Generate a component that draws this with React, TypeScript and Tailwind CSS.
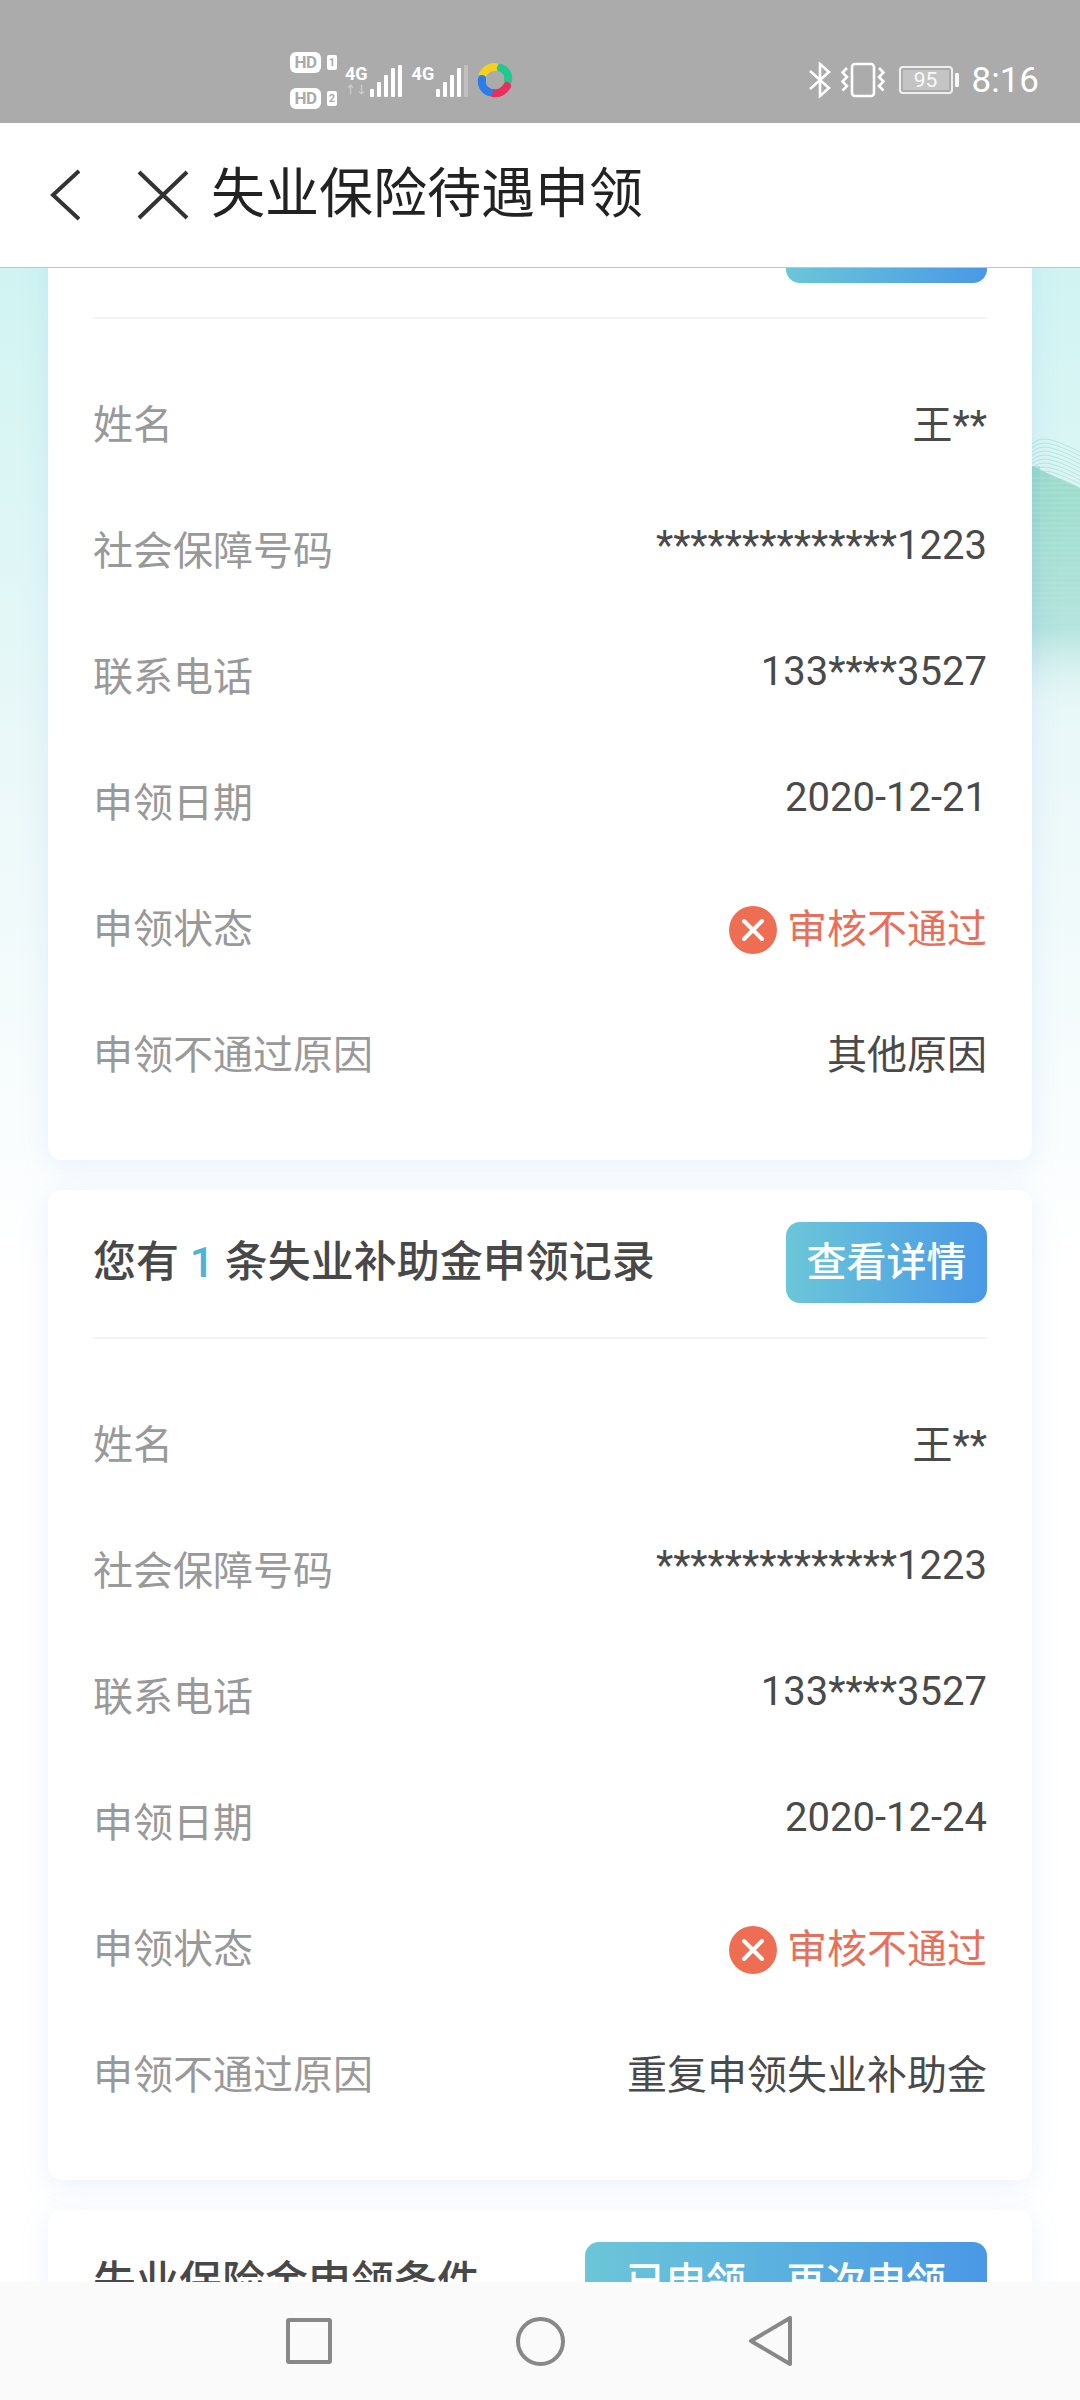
import React from "react";

const FONT = "font-['Roboto','Noto_Sans_CJK_SC',sans-serif]";

function Bars({ dim }: { dim?: boolean }) {
  const hs = [8, 15, 22, 29];
  return (
    <svg width="36" height="32" viewBox="0 0 36 32">
      {hs.map((h, i) => (
        <rect key={i} x={2 + i * 7} y={32 - h} width="4" height={h} rx="1" fill="#fff" />
      ))}
      <rect x="30" y="0" width="4" height="32" rx="1" fill="#fff" opacity={dim ? 0.25 : 1} />
    </svg>
  );
}

function HdBadge({ n }: { n: string }) {
  return (
    <div className="flex items-center gap-[6px]">
      <span className="flex h-[21px] w-[31px] items-center justify-center rounded-[6px] bg-white text-[17px] font-bold leading-none tracking-tight text-[#ababab]">HD</span>
      <span className="flex h-[15px] w-[10px] items-center justify-center rounded-[2px] bg-white text-[11px] font-bold leading-none text-[#ababab]">{n}</span>
    </div>
  );
}

function StatusBar() {
  return (
    <div className={`flex h-[123px] shrink-0 items-center bg-[#ababab] pt-[37px] text-white ${FONT}`}>
      <div className="ml-[290px] flex flex-col gap-[15px]">
        <HdBadge n="1" />
        <HdBadge n="2" />
      </div>
      <div className="ml-[8px] flex items-end">
        <div className="mb-[-1px] flex flex-col">
          <span className="text-[18px] font-bold leading-[20px]">4G</span>
          <span className="text-[11px] font-bold leading-[14px] opacity-40">↑↓</span>
        </div>
        <Bars />
      </div>
      <div className="ml-[8px] flex items-end">
        <span className="mb-[13px] text-[18px] font-bold leading-[20px]">4G</span>
        <Bars dim />
      </div>
      <svg className="ml-[7px]" width="36" height="36" viewBox="0 0 36 36" fill="none" strokeWidth="8" strokeLinecap="round">
        <path d="M6 12 C 9 7 13 5 18 5" stroke="#f6cf1f" />
        <path d="M24 6 C 29 8 32 13 31 18" stroke="#22c98f" />
        <path d="M30 24 C 27 29 22 32 16 31" stroke="#e8305f" />
        <path d="M5 17 C 4 23 7 28 12 30" stroke="#2b7de9" />
      </svg>
      <div className="ml-auto mr-[41px] flex items-center">
        <svg width="24" height="36" viewBox="0 0 24 36" fill="none" stroke="#fff" strokeWidth="2.6">
          <path d="M2 9 L21 26 L12 34 V2 L21 10 L2 27" />
        </svg>
        <svg className="ml-[9px]" width="44" height="36" viewBox="0 0 44 36" fill="none" stroke="#fff" strokeWidth="2.6">
          <rect x="11" y="2" width="22" height="32" rx="3" />
          <path d="M6 6 L1.5 10.5 L6 15 L1.5 19.5 L6 24 L1.5 28.5" />
          <path d="M38 6 L42.5 10.5 L38 15 L42.5 19.5 L38 24 L42.5 28.5" />
        </svg>
        <div className="ml-[14px] flex items-center gap-[2px]">
          <div className="flex h-[28px] w-[54px] rounded-[4px] border-2 border-white/80 p-[2px]">
            <div className="flex flex-1 items-center justify-center rounded-[1px] bg-white/30 text-[21px] leading-none text-white/90">95</div>
          </div>
          <div className="h-[14px] w-[4px] rounded-[1px] bg-white/90" />
        </div>
        <span className="ml-[13px] text-[35px] leading-none">8:16</span>
      </div>
    </div>
  );
}

function Header() {
  return (
    <div className={`relative z-10 flex h-[145px] shrink-0 items-center border-b border-[#c4c4c4] bg-white pl-[50px] ${FONT}`}>
      <svg width="30" height="52" viewBox="0 0 30 52" fill="none" stroke="#333" strokeWidth="4">
        <path d="M29 2 L3 26 L29 50" />
      </svg>
      <svg className="ml-[57px]" width="52" height="50" viewBox="0 0 52 50" fill="none" stroke="#333" strokeWidth="4">
        <path d="M2 2 L50 48 M50 2 L2 48" />
      </svg>
      <h1 className="ml-[22px] text-[54px] font-normal leading-none text-[#222]">失业保险待遇申领</h1>
    </div>
  );
}

type Row = { label: string; value: React.ReactNode; lift?: boolean };

function Rejected() {
  return (
    <span className="flex items-center gap-[10px] text-[#e8705a]">
      <svg width="48" height="48" viewBox="0 0 48 48">
        <circle cx="24" cy="24" r="24" fill="#ee6e53" />
        <path d="M15 15 L33 33 M33 15 L15 33" stroke="#fff" strokeWidth="4" strokeLinecap="round" />
      </svg>
      审核不通过
    </span>
  );
}

function Card({ title, button, wide, rows }: { title?: React.ReactNode; button?: string; wide?: boolean; rows: Row[] }) {
  return (
    <section className="rounded-[14px] bg-white px-[45px] pb-[41px] pt-[32px] shadow-[0_6px_30px_rgba(90,150,230,0.12)]">
      <div className="flex h-[81px] items-center justify-between">
        <h2 className="text-[43px] font-medium leading-none text-[#484848]">{title}</h2>
        <button className={`flex h-[81px] items-center justify-center rounded-[14px] bg-gradient-to-r from-[#6cc6d8] to-[#4a98e6] text-[40px] font-medium leading-none text-white ${wide ? "w-[402px]" : "w-[201px]"}`}>
          {button}
        </button>
      </div>
      {rows.length > 0 && (
        <>
          <div className="mb-[44px] mt-[34px] h-[2px] bg-[#f3f3f3]" />
          {rows.map((r) => (
            <div key={r.label} className="flex h-[126px] items-center justify-between text-[40px] leading-none">
              <span className="text-[#999]">{r.label}</span>
              <span className={`text-[#4a4a4a] ${r.lift ? "pb-[12px]" : ""}`}>{r.value}</span>
            </div>
          ))}
        </>
      )}
    </section>
  );
}

const rows = (date: string, reason: string): Row[] => [
  { label: "姓名", value: "王**" },
  { label: "社会保障号码", value: "**************1223", lift: true },
  { label: "联系电话", value: "133****3527", lift: true },
  { label: "申领日期", value: date, lift: true },
  { label: "申领状态", value: <Rejected /> },
  { label: "申领不通过原因", value: reason },
];

const STRIPES = Array.from({ length: 14 }, (_, i) => i * 4);
const FLOORS = Array.from({ length: 40 }, (_, i) => 40 + i * 5);

function Background() {
  return (
    <div className="absolute inset-x-0 top-0 h-[1000px] bg-gradient-to-b from-[#d0f4f2] via-[#ebf8f9] to-white">
      <svg className="absolute right-0 top-[170px]" width="48" height="280" viewBox="0 0 48 280" fill="none">
        <defs>
          <linearGradient id="b" x1="0" y1="0" x2="0" y2="1">
            <stop offset="0" stopColor="#9adccb" />
            <stop offset="0.65" stopColor="#b5e4de" />
            <stop offset="1" stopColor="#e8f6f8" stopOpacity="0" />
          </linearGradient>
          <linearGradient id="c" x1="0" y1="0" x2="0" y2="1">
            <stop offset="0" stopColor="#8fd4c6" stopOpacity="0.5" />
            <stop offset="1" stopColor="#a9cfe6" stopOpacity="0" />
          </linearGradient>
          <linearGradient id="d" x1="0" y1="0" x2="0" y2="1">
            <stop offset="0" stopColor="#fff" stopOpacity="0.2" />
            <stop offset="1" stopColor="#fff" stopOpacity="0" />
          </linearGradient>
        </defs>
        {STRIPES.map((d) => (
          <path key={d} d={`M0 ${6 + d} C 10 ${-3 + d} 22 ${1 + d} 48 ${14 + d}`} stroke="#a6e0d3" strokeWidth="1" opacity="0.7" />
        ))}
        <path d="M0 28 L48 50 V280 H0 Z" fill="url(#b)" />
        <path d="M0 28 H8 V250 H0 Z" fill="url(#c)" />
        {FLOORS.map((y) => (
          <path key={y} d={`M0 ${y} H48`} stroke="#fff" strokeWidth="1" opacity={0.2 * (1 - (y - 40) / 200)} />
        ))}
      </svg>
    </div>
  );
}

function NavBar() {
  return (
    <div className="relative z-10 flex h-[118px] shrink-0 items-center bg-[#fafafa] pl-[286px]">
      <div className="h-[46px] w-[46px] rounded-[3px] border-[4px] border-[#888]" />
      <div className="ml-[184px] h-[49px] w-[49px] rounded-full border-[4px] border-[#888]" />
      <svg className="ml-[183px]" width="45" height="50" viewBox="0 0 45 50" fill="none" stroke="#888" strokeWidth="4" strokeLinejoin="round">
        <path d="M42 2 V48 L3 25 Z" />
      </svg>
    </div>
  );
}

export default function App() {
  return (
    <div className={`flex h-[2400px] w-[1080px] flex-col overflow-hidden bg-white ${FONT}`}>
      <StatusBar />
      <Header />
      <main className="relative min-h-0 flex-1 overflow-hidden bg-white">
        <Background />
        <div className="relative mx-[48px] -mt-[98px] flex flex-col gap-[30px]">
          <Card rows={rows("2020-12-21", "其他原因")} />
          <Card
            title={
              <>
                您有 <span className="text-[#4fb3d9]">1</span> 条失业补助金申领记录
              </>
            }
            button="查看详情"
            rows={rows("2020-12-24", "重复申领失业补助金")}
          />
          <Card title="失业保险金申领条件" button="已申领，再次申领" wide rows={[]} />
        </div>
      </main>
      <NavBar />
    </div>
  );
}
